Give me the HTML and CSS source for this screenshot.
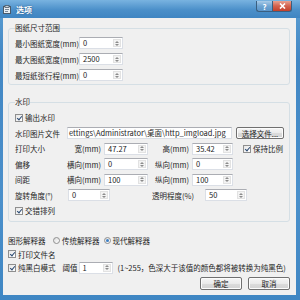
FILE: index.html
```html
<!DOCTYPE html>
<html lang="zh-CN">
<head>
  <meta charset="UTF-8">
  <meta name="viewport" content="width=device-width, initial-scale=1.0">
  <title>选项</title>
  <link rel="stylesheet" href="styles.css">
</head>
<body>
  <div class="window">
    <div class="titlebar">
      <svg class="app-icon" width="8" height="9" viewBox="0 0 8 9">
        <rect x="0.5" y="1.5" width="7" height="7" fill="#e8eef4" stroke="#4a5a6a"/>
        <rect x="2" y="0.5" width="4" height="2" fill="#c9d3dc" stroke="#4a5a6a" stroke-width="0.8"/>
        <rect x="2" y="4" width="4" height="1" fill="#7b8a99"/>
        <rect x="2" y="6" width="3" height="1" fill="#7b8a99"/>
      </svg>
      <span class="caption">选项</span>
      <div class="caption-buttons">
        <span class="cb help">?</span>
        <span class="cb close">
          <svg width="7" height="6" viewBox="0 0 7 6"><path d="M1 0.5 L6 5.5 M6 0.5 L1 5.5" stroke="#fff" stroke-width="1.6"/></svg>
        </span>
      </div>
    </div>

    <div class="client">
      <!-- 图纸尺寸 -->
      <fieldset class="group g1">
        <legend>图纸尺寸范围</legend>
        <div class="row">
          <span class="lbl w64">最小图纸宽度(mm)</span>
          <span class="spin w44"><span class="val">0</span><span class="arr"><i class="up"></i><i class="dn"></i></span></span>
        </div>
        <div class="row">
          <span class="lbl w64">最大图纸宽度(mm)</span>
          <span class="spin w44"><span class="val">2500</span><span class="arr"><i class="up"></i><i class="dn"></i></span></span>
        </div>
        <div class="row">
          <span class="lbl w64">最短纸张行程(mm)</span>
          <span class="spin w44"><span class="val">0</span><span class="arr"><i class="up"></i><i class="dn"></i></span></span>
        </div>
      </fieldset>

      <!-- 水印 -->
      <fieldset class="group g2">
        <legend>水印</legend>
        <div class="row">
          <span class="check on"></span><span class="check-text">输出水印</span>
        </div>
        <div class="row">
          <span class="lbl w52">水印图片文件</span>
          <span class="path">ettings\Administrator\桌面\http_imgload.jpg</span>
          <span class="btn browse">选择文件...</span>
        </div>
        <div class="row">
          <span class="lbl w52">打印大小</span>
          <span class="sub w37">宽(mm)</span>
          <span class="spin w44"><span class="val">47.27</span><span class="arr"><i class="up"></i><i class="dn"></i></span></span>
          <span class="sub w44">高(mm)</span>
          <span class="spin w41"><span class="val">35.42</span><span class="arr"><i class="up"></i><i class="dn"></i></span></span>
          <span class="check on keep"></span><span class="check-text">保持比例</span>
        </div>
        <div class="row">
          <span class="lbl w52">偏移</span>
          <span class="sub w37">横向(mm)</span>
          <span class="spin w44"><span class="val">0</span><span class="arr"><i class="up"></i><i class="dn"></i></span></span>
          <span class="sub w44">纵向(mm)</span>
          <span class="spin w41"><span class="val">0</span><span class="arr"><i class="up"></i><i class="dn"></i></span></span>
        </div>
        <div class="row">
          <span class="lbl w52">间距</span>
          <span class="sub w37">横向(mm)</span>
          <span class="spin w44"><span class="val">100</span><span class="arr"><i class="up"></i><i class="dn"></i></span></span>
          <span class="sub w44">纵向(mm)</span>
          <span class="spin w41"><span class="val">100</span><span class="arr"><i class="up"></i><i class="dn"></i></span></span>
        </div>
        <div class="row">
          <span class="lbl w53">旋转角度(°)</span>
          <span class="spin w42"><span class="val">0</span><span class="arr"><i class="up"></i><i class="dn"></i></span></span>
          <span class="lbl w53 gap42">透明程度(%)</span>
          <span class="spin w42"><span class="val">50</span><span class="arr"><i class="up"></i><i class="dn"></i></span></span>
        </div>
        <div class="row">
          <span class="check on"></span><span class="check-text">交错排列</span>
        </div>
      </fieldset>

      <!-- 其它 -->
      <div class="misc">
        <div class="row small">
          <span class="lbl w45">图形解释器</span>
          <span class="radio"></span><span class="check-text">传统解释器</span>
          <span class="radio on second"></span><span class="check-text">现代解释器</span>
        </div>
        <div class="row small">
          <span class="check on"></span><span class="check-text">打印文件名</span>
        </div>
        <div class="row small">
          <span class="check on"></span><span class="check-text">纯黑白模式</span>
          <span class="lbl threshold">阈值</span>
          <span class="spin w34"><span class="val">1</span><span class="arr"><i class="up"></i><i class="dn"></i></span></span>
          <span class="hint">(1~255，色深大于该值的颜色都将被转换为纯黑色)</span>
        </div>
      </div>

      <div class="actions">
        <span class="btn dlg">确定</span>
        <span class="btn dlg">取消</span>
      </div>
    </div>
  </div>
</body>
</html>
```

FILE: styles.css
```css
* {
  box-sizing: border-box;
}

body {
  margin: 0;
  font-family: "Noto Sans CJK SC", "Noto Sans", sans-serif;
  font-size: 7.5px;
  color: #1e1e1e;
}

.window {
  width: 300px;
  height: 300px;
  display: flex;
  flex-direction: column;
  background: linear-gradient(#5d9fd3, #4287c4 60px, #4b90cb 200px, #3f86c3);
}

/* title bar */
.titlebar {
  height: 18px;
  display: flex;
  align-items: center;
  padding-left: 3px;
  background: linear-gradient(#79b3e0, #4b8fc9 55%, #3f85c2);
}

.app-icon {
  margin-right: 5px;
}

.caption {
  color: #fff;
  font-size: 8px;
  font-weight: bold;
  text-shadow: 0 0 2px #1f4f7f;
}

.caption-buttons {
  margin-left: auto;
  margin-right: 8px;
  align-self: flex-start;
  margin-top: 1px;
  display: flex;
}

.cb {
  height: 11px;
  display: flex;
  align-items: center;
  justify-content: center;
  border: 1px solid #3a5f80;
  border-top: none;
  color: #fff;
  font-size: 8px;
  font-weight: bold;
}

.cb.help {
  width: 16px;
  border-radius: 0 0 0 3px;
  background: linear-gradient(#a9cbe8, #6fa5d3 50%, #5a94c8);
  border-right: none;
}

.cb.close {
  width: 20px;
  border-radius: 0 0 3px 0;
  background: linear-gradient(#e8a291, #d3624e 50%, #c3402b);
}

/* client area */
.client {
  flex: 1;
  margin: 0 4px 5px 3px;
  padding: 0 6px 0 5px;
  background: #f0f0f0;
  display: flex;
  flex-direction: column;
}

.group {
  margin: 0;
  min-width: 0;
  border: 1px solid #d5dfe5;
  border-radius: 3px;
  padding: 2px 0 1px 6px;
}

.group legend {
  padding: 0;
  line-height: 10px;
}

.g1 {
  margin-top: 5px;
}

.g2 {
  margin-top: 12px;
  padding-top: 3px;
  padding-bottom: 2.5px;
}

.row {
  height: 16px;
  display: flex;
  align-items: center;
  white-space: nowrap;
}

.g2 .row {
  height: 15.5px;
}

.row.small {
  height: 13.5px;
}

.lbl,
.sub {
  flex: none;
}

.sub {
  text-align: right;
  padding-right: 3px;
}

.w64 { width: 64px; }
.w52 { width: 52px; }
.w53 { width: 53px; }
.w45 { width: 45px; }
.w37 { width: 37px; }
.w44 { width: 44px; }
.w42 { width: 42px; }
.w41 { width: 41px; }
.w34 { width: 34px; }

.gap42 {
  margin-left: 42px;
}

/* spin boxes */
.spin {
  flex: none;
  height: 12px;
  display: flex;
  background: #fff;
  border: 1px solid #dbdfe6;
  border-top-color: #abadb3;
}

.spin .val {
  flex: 1;
  padding-left: 3px;
  line-height: 10px;
}

.spin .arr {
  width: 8px;
  margin: 1px;
  display: flex;
  flex-direction: column;
  background: #f3f3f3;
  border: 1px solid #e2e2e2;
}

.arr i {
  flex: 1;
  display: flex;
  align-items: center;
  justify-content: center;
}

.arr i::after {
  content: "";
  border-left: 2px solid transparent;
  border-right: 2px solid transparent;
}

.arr .up::after {
  border-bottom: 2px solid #8c8c8c;
}

.arr .dn::after {
  border-top: 2px solid #8c8c8c;
}

/* file path */
.path {
  width: 165px;
  height: 12px;
  flex: none;
  overflow: hidden;
  background: #fff;
  border: 1px solid #dbdfe6;
  border-top-color: #abadb3;
  line-height: 10px;
  padding-left: 1px;
}

/* buttons */
.btn {
  flex: none;
  display: flex;
  align-items: center;
  justify-content: center;
  border: 1px solid #707070;
  border-radius: 2px;
  background: linear-gradient(#f6f6f6, #eaeaea 50%, #dcdcdc 51%, #d2d2d2);
  box-shadow: inset 0 0 0 1px #fcfcfc;
}

.browse {
  width: 48px;
  height: 12px;
  margin-left: 4px;
}

.actions {
  display: flex;
  justify-content: flex-end;
  gap: 6px;
  margin-top: 2px;
}

.dlg {
  width: 42px;
  height: 13px;
}

/* check boxes & radios */
.check {
  flex: none;
  width: 8px;
  height: 8px;
  border: 1px solid #8f8f8f;
  background: linear-gradient(135deg, #e6e6e6, #fff);
  margin-right: 2px;
  position: relative;
}

.check.on::after {
  content: "";
  position: absolute;
  left: 1.5px;
  top: 0;
  width: 2px;
  height: 4px;
  border: solid #2b4a73;
  border-width: 0 1.3px 1.3px 0;
  transform: rotate(40deg);
}

.keep {
  margin-left: 10px;
}

.radio {
  flex: none;
  width: 7px;
  height: 7px;
  border-radius: 50%;
  border: 1px solid #8f8f8f;
  background: linear-gradient(135deg, #dcdcdc, #fff);
  margin-right: 2px;
  position: relative;
}

.radio.on::after {
  content: "";
  position: absolute;
  left: 1px;
  top: 1px;
  width: 3px;
  height: 3px;
  border-radius: 50%;
  background: #3c7fc4;
}

.radio.second {
  margin-left: 4px;
}

.misc {
  margin-top: 12px;
}

.threshold {
  margin-left: 7px;
  width: 16px;
}

.hint {
  margin-left: 5px;
}
```
